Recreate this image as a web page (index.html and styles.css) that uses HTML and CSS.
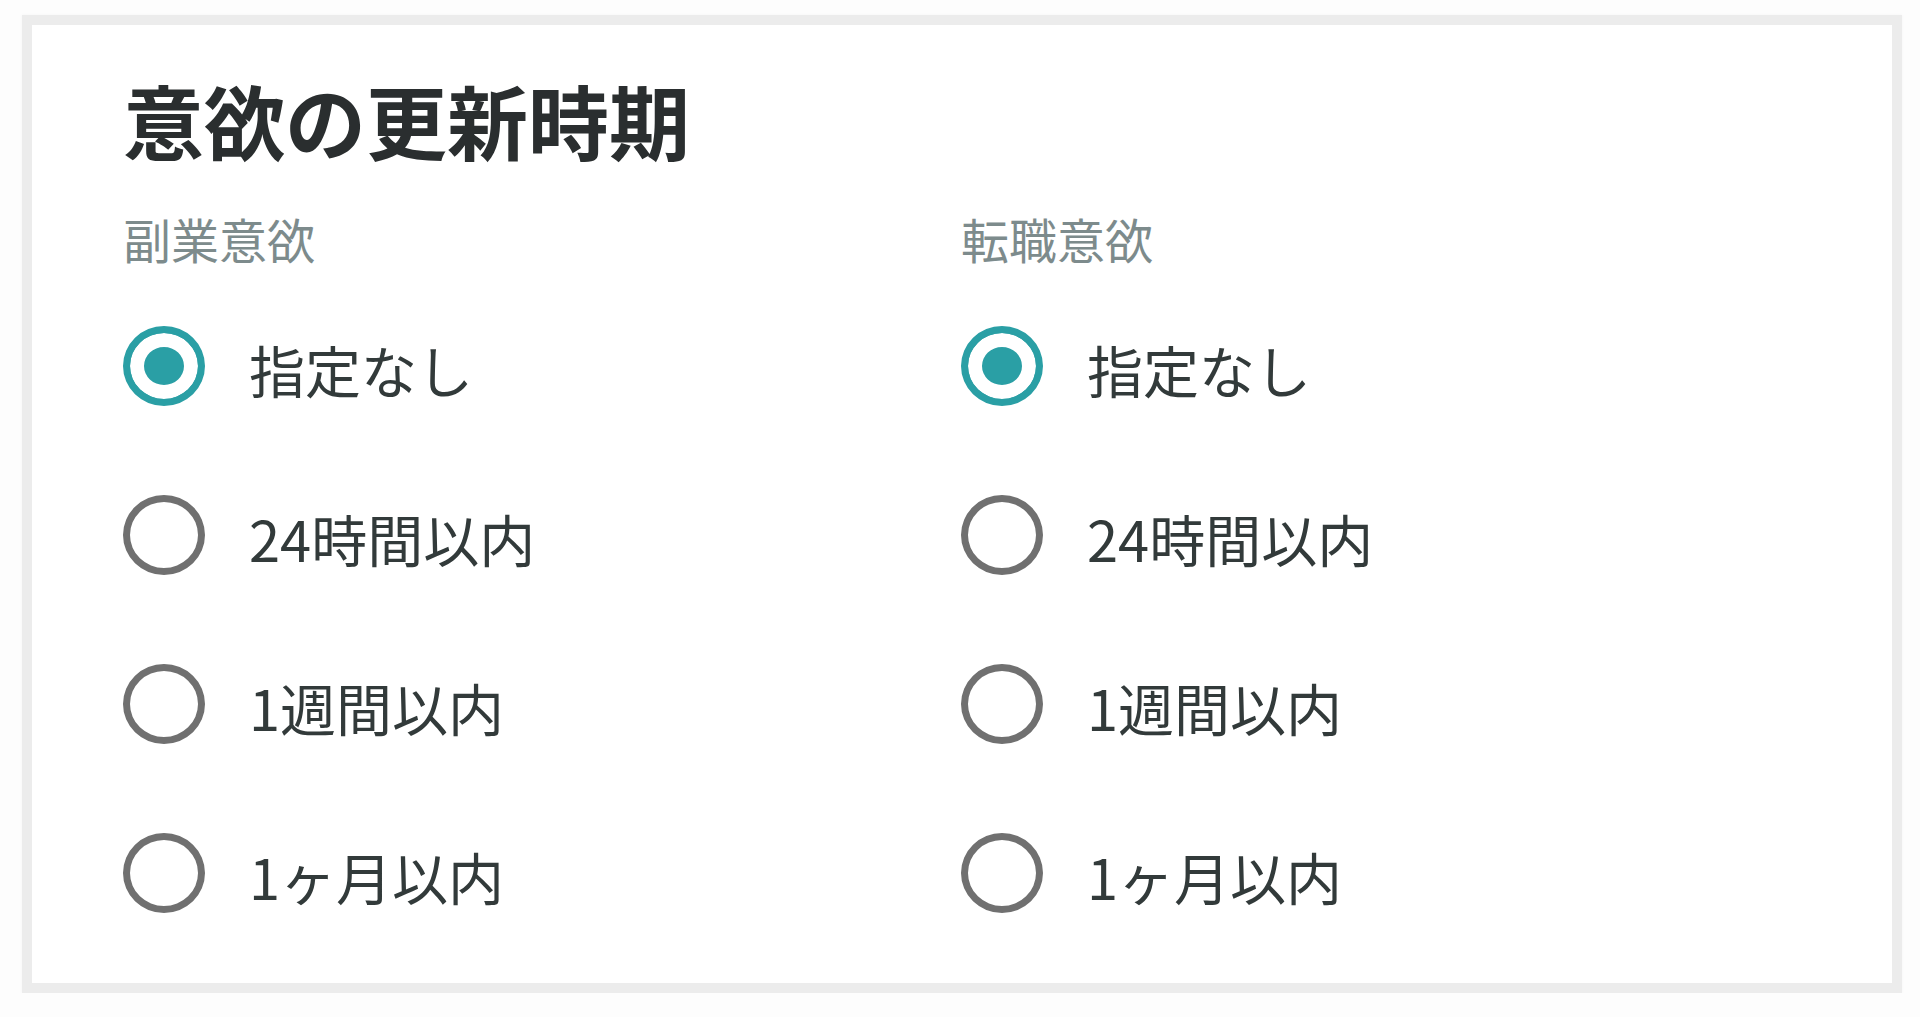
FILE: index.html
```html
<!DOCTYPE html>
<html lang="ja">
<head>
    <meta charset="UTF-8">
    <meta name="viewport" content="width=device-width, initial-scale=1.0">
    <title>意欲の更新時期</title>
    <link rel="stylesheet" href="styles.css">
</head>
<body>
    <div class="card">
        <h2>意欲の更新時期</h2>
        <div class="columns">
            <div class="group">
                <div class="group-title">副業意欲</div>
                <div class="options">
                    <label class="option"><input type="radio" name="side" checked><span>指定なし</span></label>
                    <label class="option"><input type="radio" name="side"><span>24時間以内</span></label>
                    <label class="option"><input type="radio" name="side"><span>1週間以内</span></label>
                    <label class="option"><input type="radio" name="side"><span>1ヶ月以内</span></label>
                </div>
            </div>
            <div class="group">
                <div class="group-title">転職意欲</div>
                <div class="options">
                    <label class="option"><input type="radio" name="change" checked><span>指定なし</span></label>
                    <label class="option"><input type="radio" name="change"><span>24時間以内</span></label>
                    <label class="option"><input type="radio" name="change"><span>1週間以内</span></label>
                    <label class="option"><input type="radio" name="change"><span>1ヶ月以内</span></label>
                </div>
            </div>
        </div>
    </div>
</body>
</html>
```

FILE: styles.css
```css
body {
    font-family: "Noto Sans CJK JP", "Noto Sans", sans-serif;
    background-color: #fdfdfd;
    margin: 0;
    padding: 15px 18px 0 22px;
}
.card {
    background: #fff;
    border: 10px solid #ececec;
    height: 958px;
    padding: 0 0 0 91px;
    box-shadow: 0 0 3px rgba(0, 0, 0, 0.04);
}
h2 {
    margin: 53px 0 55px;
    font-size: 81px;
    line-height: 1;
    font-weight: bold;
    color: #2a2e2f;
}
.columns {
    display: grid;
    grid-template-columns: 838px 1fr;
}
.group-title {
    font-size: 48px;
    line-height: 1;
    color: #7d8b8c;
    margin-bottom: 64px;
}
.options {
    display: flex;
    flex-direction: column;
    gap: 89px;
}
.option {
    display: flex;
    align-items: center;
    gap: 44px;
    font-size: 56px;
    line-height: 1;
    color: #323a3a;
    cursor: pointer;
}
.option span {
    padding-top: 5px;
}
.option input {
    appearance: none;
    -webkit-appearance: none;
    margin: 0;
    width: 82px;
    height: 80px;
    border: 7px solid #707070;
    border-radius: 50%;
    background: #fff;
    flex-shrink: 0;
}
.option input:checked {
    border-color: #2a9fa5;
    background: #2a9fa5;
    box-shadow: inset 0 0 0 14px #fff;
}
```
